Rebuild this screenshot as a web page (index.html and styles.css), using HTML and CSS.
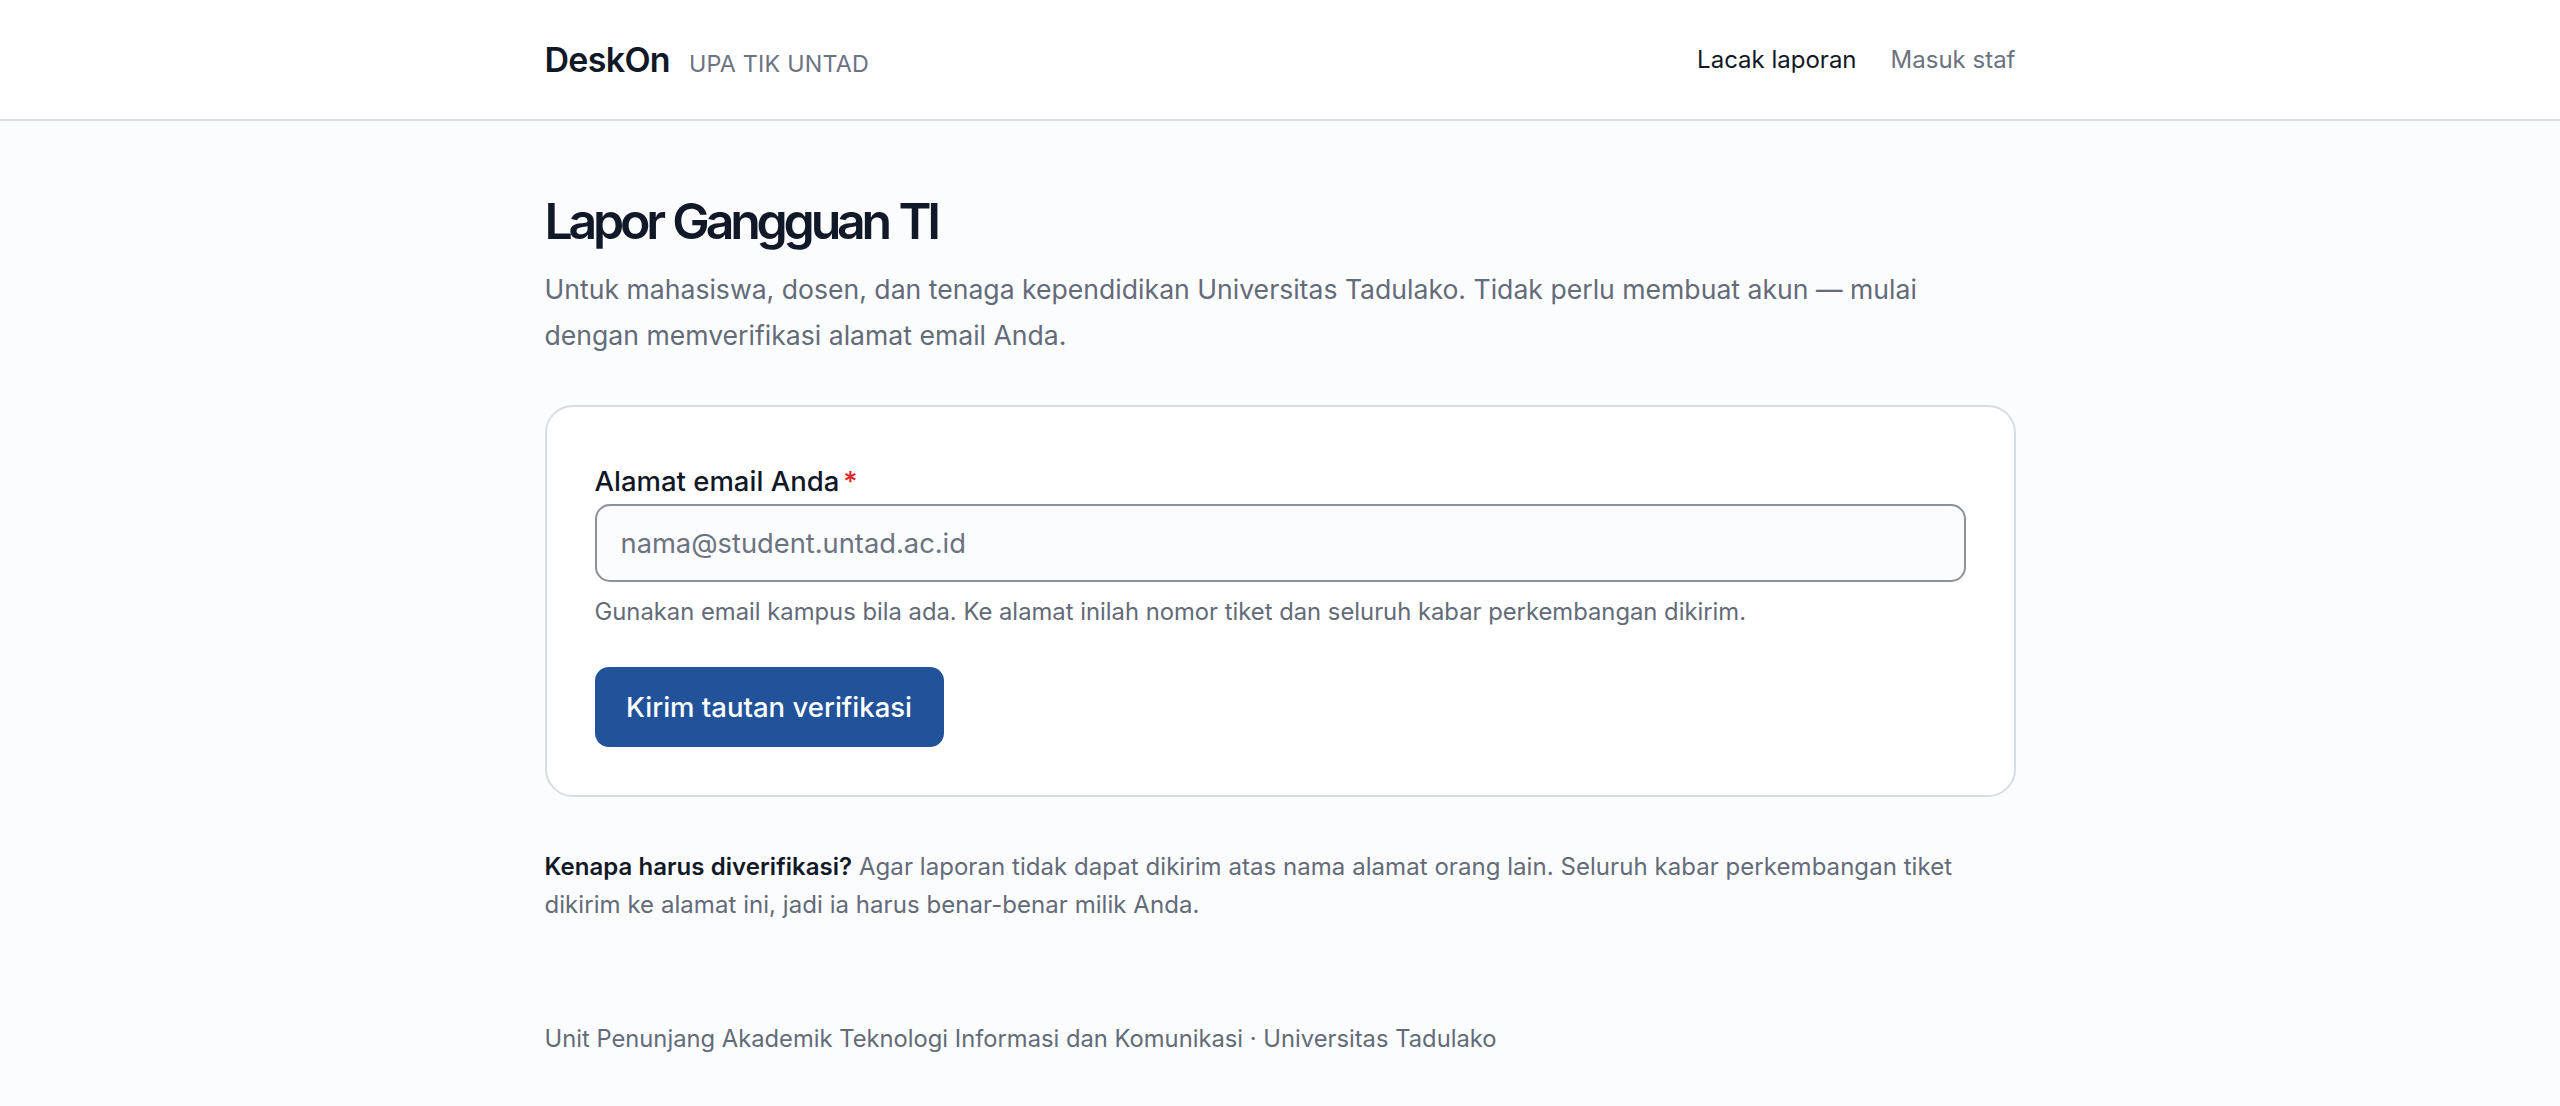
FILE: index.html
```html
<!DOCTYPE html>
<html lang="id">
<head>
<meta charset="utf-8">
<title>DeskOn — Lapor Gangguan TI</title>
<link rel="stylesheet" href="styles.css">
</head>
<body>
<header class="site-header">
  <div class="container header-inner">
    <div class="brand">
      <span class="brand-name">DeskOn</span>
      <span class="brand-sub">UPA TIK UNTAD</span>
    </div>
    <nav class="nav">
      <a class="nav-link active" href="#">Lacak laporan</a>
      <a class="nav-link" href="#">Masuk staf</a>
    </nav>
  </div>
</header>
<main class="container main">
  <h1 class="title">Lapor Gangguan TI</h1>
  <p class="lead">Untuk mahasiswa, dosen, dan tenaga kependidikan Universitas Tadulako. Tidak perlu membuat akun — mulai dengan memverifikasi alamat email Anda.</p>
  <form class="card">
    <label class="label" for="email">Alamat email Anda<span class="req">*</span></label>
    <input class="input" id="email" type="email" placeholder="nama@student.untad.ac.id">
    <p class="help">Gunakan email kampus bila ada. Ke alamat inilah nomor tiket dan seluruh kabar perkembangan dikirim.</p>
    <button class="btn" type="button">Kirim tautan verifikasi</button>
  </form>
  <p class="note"><strong>Kenapa harus diverifikasi?</strong> Agar laporan tidak dapat dikirim atas nama alamat orang lain. Seluruh kabar perkembangan tiket dikirim ke alamat ini, jadi ia harus benar-benar milik Anda.</p>
</main>
<footer class="container footer">Unit Penunjang Akademik Teknologi Informasi dan Komunikasi · Universitas Tadulako</footer>
</body>
</html>
```
FILE: styles.css
```css
* { box-sizing: border-box; }
html, body { margin: 0; padding: 0; }
body {
  background: #fbfcfd;
  font-family: Inter, "Noto Sans", sans-serif;
  color: #111827;
  min-height: 1106px;
}
.container {
  width: 1471px;
  margin: 0 auto;
}
.site-header {
  background: #ffffff;
  border-bottom: 2px solid #dcdfe4;
}
.header-inner {
  height: 119px;
  display: flex;
  align-items: center;
  justify-content: space-between;
}
.brand {
  display: flex;
  align-items: baseline;
  gap: 19px;
}
.brand-name {
  font-size: 34px;
  font-weight: 600;
  letter-spacing: -0.7px;
  color: #111827;
  line-height: 40px;
}
.brand-sub {
  font-size: 23.3px;
  color: #6b7280;
  letter-spacing: 0.2px;
}
.nav {
  display: flex;
  gap: 34px;
}
.nav-link {
  font-size: 24px;
  line-height: 32px;
  color: #6b7280;
  text-decoration: none;
}
.nav-link.active { color: #111827; }
.main {
  padding-top: 68px;
}
.title {
  margin: 0;
  font-size: 50px;
  line-height: 64px;
  font-weight: 600;
  letter-spacing: -4.2px;
  word-spacing: 2px;
  color: #111827;
}
.lead {
  margin: 13px 0 0;
  font-size: 26.6px;
  line-height: 46px;
  color: #636b78;
}
.card {
  margin-top: 47px;
  background: #ffffff;
  border: 2px solid #d9dde3;
  border-radius: 28px;
  padding: 56px 48px 48px;
  display: flex;
  flex-direction: column;
  align-items: flex-start;
}
.label {
  font-size: 27.5px;
  line-height: 36px;
  color: #111827;
  font-weight: 500;
}
.req { color: #dc2626; margin-left: 4px; }
.input {
  margin-top: 5px;
  width: 100%;
  height: 78px;
  border: 2px solid #8b919a;
  border-radius: 15px;
  background: #fbfcfd;
  padding: 0 24px;
  font-family: inherit;
  font-size: 27.3px;
  color: #111827;
  outline: none;
}
.input::placeholder { color: #6b7280; }
.help {
  margin: 14px 0 0;
  font-size: 23.8px;
  line-height: 32px;
  color: #636b78;
}
.btn {
  margin-top: 39px;
  height: 80px;
  padding: 0 31.5px;
  background: #22539a;
  color: #ffffff;
  border: none;
  border-radius: 14px;
  font-family: inherit;
  font-size: 27.5px;
  font-weight: 500;
}
.note {
  margin: 51px 0 0;
  font-size: 24px;
  line-height: 37.5px;
  letter-spacing: 0.05px;
  color: #636b78;
}
.note strong { color: #111827; font-weight: 600; }
.footer {
  padding-top: 97px;
  font-size: 23.75px;
  line-height: 37.5px;
  color: #636b78;
}
```
